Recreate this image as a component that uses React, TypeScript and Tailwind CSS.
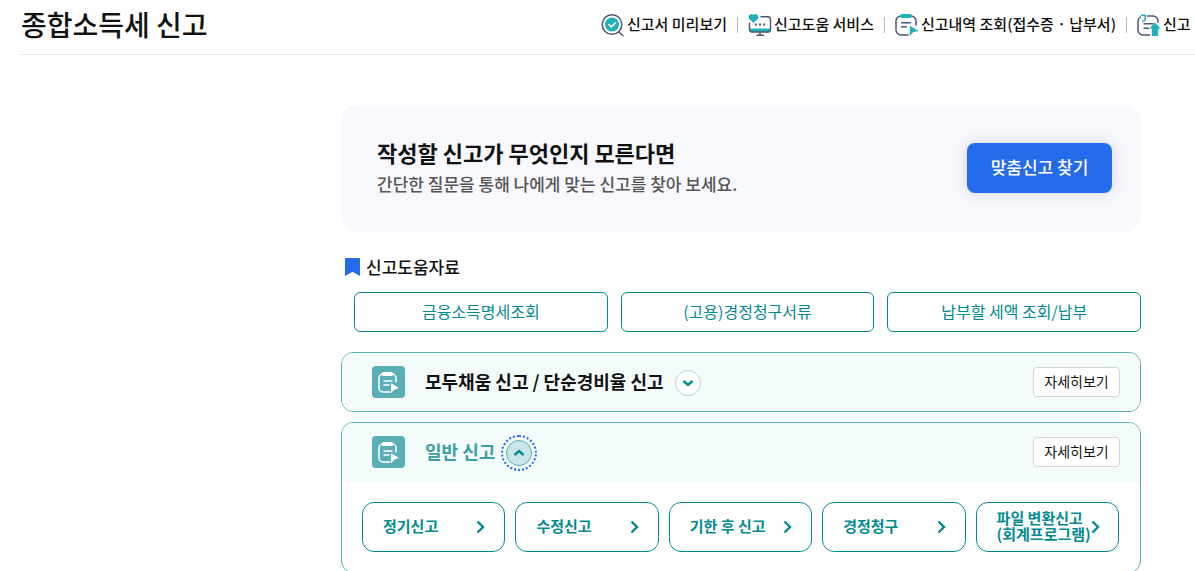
import React from 'react'

const PreviewIcon = () => (
  <svg width="24" height="24" viewBox="0 0 24 24" fill="none" aria-hidden="true" className="shrink-0">
    <circle cx="11" cy="11.5" r="9.8" stroke="#4f5670" strokeWidth="1.5" />
    <path d="M17.8 19 22 22.7" stroke="#4f5670" strokeWidth="1.5" strokeLinecap="round" />
    <circle cx="11" cy="11.5" r="7" fill="#1fb1b9" />
    <path d="m7.8 11.5 2.5 2.4 4.2-4.2" stroke="#fff" strokeWidth="1.5" strokeLinecap="round" strokeLinejoin="round" />
  </svg>
)

const ServiceIcon = () => (
  <svg width="24" height="24" viewBox="0 0 24 24" fill="none" aria-hidden="true" className="shrink-0">
    <path d="M1.5 15.5h21v1a2.5 2.5 0 0 1-2.5 2.5H4a2.5 2.5 0 0 1-2.5-2.5z" fill="#1fb1b9" />
    <path d="M13 3.7h7a2.5 2.5 0 0 1 2.5 2.5v10.3A2.5 2.5 0 0 1 20 19H4a2.5 2.5 0 0 1-2.5-2.5V10" stroke="#4f5670" strokeWidth="1.4" strokeLinecap="round" />
    <path d="M12 19v3M9 22.3h6.5" stroke="#4f5670" strokeWidth="1.5" strokeLinecap="round" />
    <path d="M7 11.5h2M11 11.5h2M15 11.5h2" stroke="#4f5670" strokeWidth="1.8" />
    <path d="M5.5 10 .9 5.4A2.9 2.9 0 0 1 5.5 2a2.9 2.9 0 0 1 4.6 3.4z" fill="#1fb1b9" />
  </svg>
)

const HistoryIcon = () => (
  <svg width="24" height="24" viewBox="0 0 24 24" fill="none" aria-hidden="true" className="shrink-0">
    <path d="M21 12V8a5 5 0 0 0-5-5H6a5 5 0 0 0-5 5v9a5 5 0 0 0 5 5h7" stroke="#4f5670" strokeWidth="1.5" strokeLinecap="round" />
    <rect x="5" y="1" width="12" height="4" rx="2" fill="#1fb1b9" />
    <path d="M6.5 9.8h9M6.5 13.8h5" stroke="#4f5670" strokeWidth="1.5" strokeLinecap="round" />
    <path d="m14.8 12.8 9 5.2-5.5 1-3.5 4z" fill="#1fb1b9" />
  </svg>
)

const SubmitIcon = () => (
  <svg width="24" height="24" viewBox="0 0 24 24" fill="none" aria-hidden="true" className="shrink-0">
    <path d="M21 9V8a5 5 0 0 0-5-5h-5.5M3.2 4A5 5 0 0 0 1 8v9a5 5 0 0 0 5 5h6.5" stroke="#4f5670" strokeWidth="1.5" strokeLinecap="round" />
    <path d="M4 2.2h4.2V6a2 2 0 0 1-3 1.7" stroke="#1fb1b9" strokeWidth="1.6" />
    <path d="M7 10.8h9M7 15.3h4.5" stroke="#4f5670" strokeWidth="1.5" strokeLinecap="round" />
    <path d="m18 9.5 5.5 6h-2.3V23h-6.4v-7.5h-2.3z" fill="#1fb1b9" />
  </svg>
)

const FormIcon = () => (
  <span className="flex h-8 w-[33px] shrink-0 items-center justify-center rounded bg-[#5aaeb6]">
    <svg width="23" height="23" viewBox="0 0 23 23" fill="none" aria-hidden="true">
      <path d="M19 11V7a4 4 0 0 0-4-4H6a4 4 0 0 0-4 4v10a4 4 0 0 0 4 4h7" stroke="#fff" strokeWidth="1.5" strokeLinecap="round" />
      <rect x="5" y="1" width="11" height="4" rx="1.5" fill="#fff" />
      <path d="M7 10h8M7 14h5" stroke="#fff" strokeWidth="1.5" strokeLinecap="round" />
      <path d="m14 12 8 5-4.5 1.5L14 22z" fill="#fff" />
    </svg>
  </span>
)

const Chevron = () => (
  <svg width="10" height="14" viewBox="0 0 10 14" fill="none" aria-hidden="true" className="shrink-0">
    <path d="M1.5 1.5 7 7l-5.500 5.500" stroke="#028a92" strokeWidth="2.4" />
  </svg>
)

const topLinks = [
  { label: '신고서 미리보기', icon: <PreviewIcon /> },
  { label: '신고도움 서비스', icon: <ServiceIcon /> },
  { label: '신고내역 조회(접수증 · 납부서)', icon: <HistoryIcon /> },
  { label: '신고', icon: <SubmitIcon /> },
]

const helpLinks = ['금융소득명세조회', '(고용)경정청구서류', '납부할 세액 조회/납부']

const reports = [['정기신고'], ['수정신고'], ['기한 후 신고'], ['경정청구'], ['파일 변환신고', '(회계프로그램)']]

type PanelProps = { title: string; open?: boolean; children?: React.ReactNode }

const Panel = ({ title, open = false, children }: PanelProps) => (
  <section className="mt-[10px] overflow-hidden rounded-xl border border-[#5aaeb6] bg-white">
    <div className={`flex items-center bg-[#f3fbfb] pl-[30px] pr-5 ${open ? 'h-[59px] pb-px' : 'h-[58px]'}`}>
      <FormIcon />
      <h3 className={`ml-5 pb-0.5 text-lg font-bold ${open ? 'text-[#3c9fa8]' : 'text-[#111]'}`}>{title}</h3>
      <button
        type="button"
        aria-expanded={open}
        aria-label={title}
        className={`ml-[11px] mt-0.5 flex size-[26px] items-center justify-center rounded-full border ${
          open
            ? 'border-[#5aaeb6] bg-[#c9e5e7] outline-2 outline-offset-3 outline-dotted outline-[#246beb]'
            : 'border-[#b5d5d8] bg-white'
        }`}
      >
        <svg width="12" height="8" viewBox="0 0 12 8" fill="none" aria-hidden="true">
          <path d={open ? 'm1.5 6 4.5-4 4.5 4' : 'm1.5 2 4.5 4 4.5-4'} stroke="#028a92" strokeWidth="2.4" />
        </svg>
      </button>
      <button type="button" className="ml-auto h-[30px] w-[87px] rounded border border-[#d5d5d5] bg-white pb-0.5 text-sm text-[#111]">
        자세히보기
      </button>
    </div>
    {children}
  </section>
)

const App = () => {
  return (
    <div className="w-full overflow-hidden bg-white font-['Noto_Sans_CJK_KR','Noto_Sans',sans-serif] text-[#111]">
      <header className="ml-[21px] flex h-[55px] items-center border-b border-[#e3e4ec] pb-1">
        <h1 className="shrink-0 whitespace-nowrap pb-0.5 text-[28px] font-medium">종합소득세 신고</h1>
        <nav className="ml-auto w-[594px] shrink-0">
          <ul className="flex">
            {topLinks.map((item) => (
              <li key={item.label} className="group flex shrink-0 items-center">
                <a href="#" className="flex items-center gap-[2px] whitespace-nowrap text-[15px] font-medium">
                  {item.icon}
                  <span className="pb-0.5">{item.label}</span>
                </a>
                <span className="mx-[10px] h-4 w-px bg-[#bbb] group-last:hidden" />
              </li>
            ))}
          </ul>
        </nav>
      </header>

      <main className="ml-[341px] mr-[54px] pt-[50px]">
        <section className="flex h-[127px] items-center justify-between rounded-2xl bg-[#f8f9ff] pb-0.5 pl-9 pr-[29px]">
          <div>
            <h2 className="text-[22px] leading-8 font-bold">작성할 신고가 무엇인지 모른다면</h2>
            <p className="text-[17px] leading-8 font-medium text-[#555]">간단한 질문을 통해 나에게 맞는 신고를 찾아 보세요.</p>
          </div>
          <button type="button" className="h-[50px] w-[145px] rounded-lg bg-[#246beb] pb-0.5 text-[17px] font-medium text-white shadow-[0_0_16px_rgba(0,0,0,0.15)]">
            맞춤신고 찾기
          </button>
        </section>

        <section className="pt-[23px]">
          <div className="flex h-6 items-center gap-[6px] pl-1">
            <svg width="15" height="18" viewBox="0 0 15 18" aria-hidden="true">
              <path d="M1 0h13a1 1 0 0 1 1 1v17l-7.5-4.2L0 18V1a1 1 0 0 1 1-1z" fill="#246beb" />
            </svg>
            <h2 className="text-[17px] font-medium">신고도움자료</h2>
          </div>
          <div className="mt-[13px] mb-5 grid grid-cols-3 gap-[13px] pl-[13px]">
            {helpLinks.map((label) => (
              <button key={label} type="button" className="h-10 rounded-md border border-[#028a92] pb-0.5 text-base text-[#028a92]">
                {label}
              </button>
            ))}
          </div>
        </section>

        <Panel title="모두채움 신고 / 단순경비율 신고" />
        <Panel title="일반 신고" open>
          <div className="grid grid-cols-5 gap-[10px] py-5 pl-5 pr-[21px]">
            {reports.map((lines) => (
              <button
                key={lines[0]}
                type="button"
                className="flex h-[50px] items-center justify-between rounded-xl border border-[#028a92] pl-5 pr-[18px] text-left text-[15px] leading-4 font-bold text-[#028a92]"
              >
                <span className="whitespace-nowrap pb-0.5">
                  {lines.map((line) => (
                    <span key={line} className="block">{line}</span>
                  ))}
                </span>
                <Chevron />
              </button>
            ))}
          </div>
        </Panel>
      </main>
    </div>
  )
}

export default App
